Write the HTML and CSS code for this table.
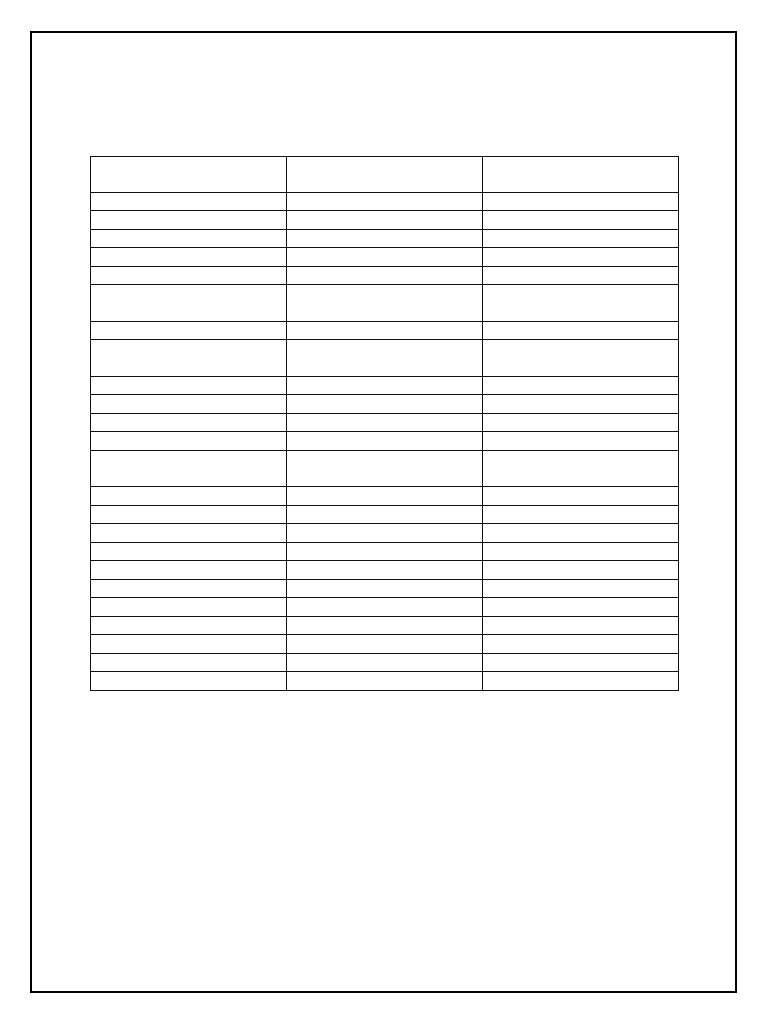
FILE: index.html
```html
<!DOCTYPE html>
<html>
<head>
<meta charset="utf-8">
<link rel="stylesheet" href="styles.css">
</head>
<body>
<div class="page">
  <table class="grid">
    <tr class="head"><td></td><td></td><td></td></tr>
    <tr><td></td><td></td><td></td></tr>
    <tr><td></td><td></td><td></td></tr>
    <tr><td></td><td></td><td></td></tr>
    <tr><td></td><td></td><td></td></tr>
    <tr><td></td><td></td><td></td></tr>
    <tr class="tall"><td></td><td></td><td></td></tr>
    <tr><td></td><td></td><td></td></tr>
    <tr class="tall"><td></td><td></td><td></td></tr>
    <tr><td></td><td></td><td></td></tr>
    <tr><td></td><td></td><td></td></tr>
    <tr><td></td><td></td><td></td></tr>
    <tr><td></td><td></td><td></td></tr>
    <tr class="tall"><td></td><td></td><td></td></tr>
    <tr><td></td><td></td><td></td></tr>
    <tr><td></td><td></td><td></td></tr>
    <tr><td></td><td></td><td></td></tr>
    <tr><td></td><td></td><td></td></tr>
    <tr><td></td><td></td><td></td></tr>
    <tr><td></td><td></td><td></td></tr>
    <tr><td></td><td></td><td></td></tr>
    <tr><td></td><td></td><td></td></tr>
    <tr><td></td><td></td><td></td></tr>
    <tr><td></td><td></td><td></td></tr>
    <tr><td></td><td></td><td></td></tr>
  </table>
</div>
</body>
</html>
```
FILE: styles.css
```css
html, body {
  margin: 0;
  padding: 0;
  background: #fff;
  font-family: "Liberation Sans", Arial, sans-serif;
}
.page {
  box-sizing: border-box;
  margin: 31px 0 0 30px;
  width: 707px;
  height: 962px;
  border: 2px solid #000;
  padding: 123px 0 0 58px;
}
.grid {
  border-collapse: collapse;
  table-layout: fixed;
  width: 589px;
}
.grid td {
  border: 1px solid #111;
  padding: 0;
  height: 17.5px;
}
.grid tr.tall td {
  height: 35.5px;
}
.grid tr.head td {
  height: 34.5px;
}
```
